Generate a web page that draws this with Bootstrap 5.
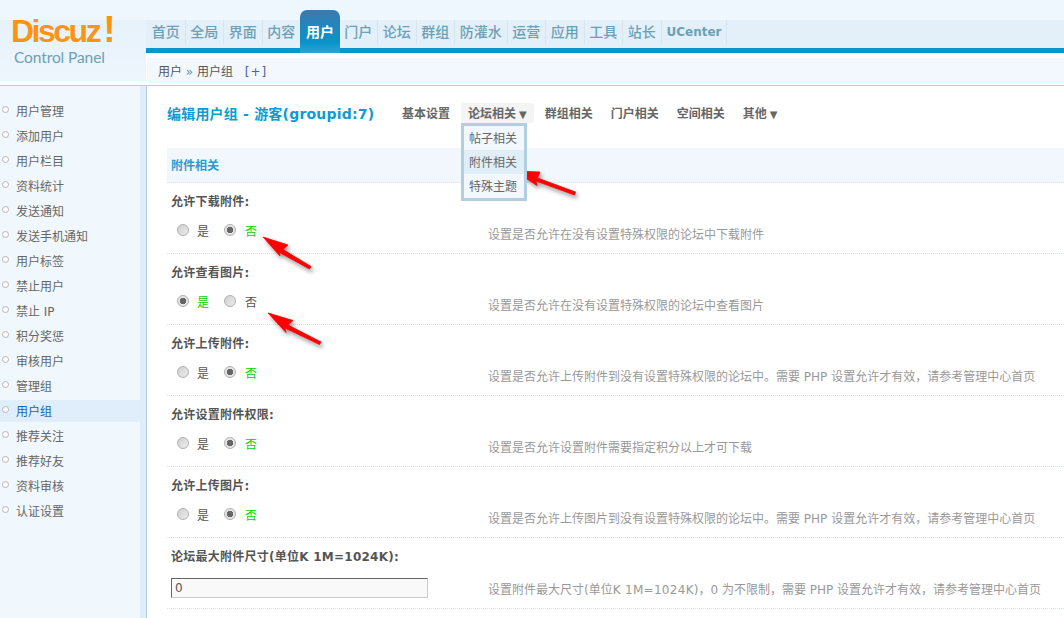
<!DOCTYPE html>
<html lang="zh-CN">
<head>
<meta charset="utf-8">
<title>Discuz! Control Panel</title>
<link href="https://cdn.jsdelivr.net/npm/bootstrap@5.3.0/dist/css/bootstrap.min.css" rel="stylesheet">
<style>
html,body{height:100%;}
body{background:#fff;color:#666;font:12px/20px "DejaVu Sans","Noto Sans CJK SC",sans-serif;overflow:hidden;}
.shell{width:1064px;height:618px;overflow:hidden;position:relative;}
.top{height:86px;border-bottom:1px solid #b3cfdd;background:#fff;}
.logo-box{width:146px;height:81px;background:linear-gradient(#eef6fe 0,#eef6fe 20px,#e6f1fa 20px,#eef6fd 80px);padding:16px 0 0 11px;flex:none;}
.logo-main{font:700 32px/30px "Liberation Sans",sans-serif;letter-spacing:-2.5px;color:#fb9313;text-shadow:0 0 2px #fff;white-space:nowrap;}
.logo-bang{font-size:37px;line-height:0;letter-spacing:0;margin-left:4px;}
.logo-sub{font:15.5px/20px "Lato",sans-serif;letter-spacing:-.1px;color:#6d9fb6;margin:1px 0 0 3px;}
.top-right{flex:1;min-width:0;border-left:1px solid #fff;}
.menu-wrap{height:48px;margin-left:-1px;background:linear-gradient(#eef6fe 0,#eef6fe 20px,#e3f0fa 20px,#e3f0fa 48px);padding-left:1px;}
.menu-link{display:block;height:24px;line-height:24px;margin-bottom:4px;padding:0 4.75px;font-size:14px;font-weight:500;color:#6ba0b6;border-right:1px solid #d5e6f1;text-decoration:none;}
.menu-last{font-size:12px;font-weight:700;padding-left:5px;}
.menu-on{height:43px;margin:0 0 -5px -1px;padding:12px 5.5px 0 6px;border:0;border-radius:7px 7px 0 0;background:linear-gradient(#3b79b2,#0a93c8 75%,#2aa5d4);color:#fff;font-weight:700;position:relative;z-index:1;line-height:20px;}
.menu-on:hover{color:#fff;}
.blue-bar{height:5px;background:#0099cc;margin-left:-1px;}
.crumb{height:25px;margin-top:5px;background:#f2f8fd;padding-left:11px;line-height:28px;color:#555;}
.crumb-add{color:#4a60aa;margin-left:8px;letter-spacing:1px;}
.crumb-sep{color:#6a8fb0;}
.page{height:532px;}
.side{width:147px;flex:none;background:#f1f8fd;border-right:1px solid #b3cfdd;box-shadow:inset -6px 0 0 #deedf8;padding-top:14px;}
.side-link{display:block;width:140px;height:22px;margin-bottom:3px;padding-left:16px;line-height:24px;color:#666;text-decoration:none;position:relative;}
.side-link::before{content:"";position:absolute;left:2px;top:6px;width:7px;height:7px;border:1px solid #b5b5b5;border-radius:50%;background:#fff;}
.side-on{background:#dfeefa;color:#1a66a8;}
.work{flex:1;min-width:0;padding-left:20px;}
.title-row{height:20px;margin-top:17px;margin-bottom:25px;}
.title-text{width:228px;flex:none;font-size:14px;line-height:22px;font-weight:700;color:#0e9bd0;white-space:nowrap;letter-spacing:.2px;}
.tab-link{display:block;height:20px;line-height:22px;padding:0 7px;margin-right:4px;font-weight:700;color:#666;text-decoration:none;white-space:nowrap;border-radius:3px;}
.tab-link:hover{color:#666;}
.tab-on{background:#f4f4f4;}
.tab-arrow{font-size:10px;margin-left:3px;}
.sub-menu.dropdown-menu{top:20px;left:0;min-width:0;width:66px;padding:0;border:3px solid #b0cfe0;border-radius:0;background:#f2f8fd;font-size:12px;}
.sub-menu .dropdown-item{height:24px;line-height:26px;padding:0 0 0 5px;color:#666;}
.sub-menu .sub-on{background:#e0eef8;}
.sec-head{height:35px;background:#f1f7fc;border-bottom:1px dotted #cfe6f5;padding-left:4px;line-height:36px;font-weight:700;color:#2a9ccc;}
.opt{height:71px;border-bottom:1px dotted #cfe6f5;}
.opt-left{width:317px;flex:none;padding:9px 0 0 4px;}
.opt-label{font-weight:700;color:#555;height:20px;white-space:nowrap;letter-spacing:.25px;}
.opt-ctl{margin-top:8px;height:20px;padding-left:6px;color:#555;}
.opt-desc{padding:42px 0 0 4px;color:#999;white-space:nowrap;}
.unit-txt{letter-spacing:.3px;}
.radio-x{appearance:none;-webkit-appearance:none;width:12px;height:12px;margin:0 8px 0 0;border:1px solid #b0b0b0;border-radius:50%;background:linear-gradient(135deg,#d0d0d0,#ececec);flex:none;}
.radio-x:checked{background:radial-gradient(circle,#666 0,#666 3px,#e4e4e4 3.5px);}
.radio-x + .radio-txt + .radio-x{margin-right:9px;}
.radio-txt{width:19px;margin-right:8px;padding-top:3px;}
.radio-txt.is-on{color:#00d400;}
.size-input.form-control{width:257px;height:20px;margin:3px 0 0 0;padding:0 3px;font:12px/18px "DejaVu Sans",sans-serif;color:#555;background:#f9f9f9;border:1px solid;border-color:#666 #ccc #ccc #666;border-radius:0;box-shadow:none;}
.opt-size .opt-ctl{padding-left:0;}
.marks{position:absolute;left:0;top:0;width:1064px;height:618px;pointer-events:none;z-index:5;filter:drop-shadow(2px 3px 2px rgba(0,0,0,.4));}
</style>
</head>
<body>
<div class="shell">
  <header class="top d-flex">
    <div class="logo-box">
      <div class="logo-main">Discuz<span class="logo-bang">!</span></div>
      <div class="logo-sub">Control Panel</div>
    </div>
    <div class="top-right">
      <ul class="menu-wrap nav align-items-end flex-nowrap">
        <li><a class="menu-link" href="#">首页</a></li>
        <li><a class="menu-link" href="#">全局</a></li>
        <li><a class="menu-link" href="#">界面</a></li>
        <li><a class="menu-link" href="#">内容</a></li>
        <li><a class="menu-link menu-on" href="#">用户</a></li>
        <li><a class="menu-link" href="#">门户</a></li>
        <li><a class="menu-link" href="#">论坛</a></li>
        <li><a class="menu-link" href="#">群组</a></li>
        <li><a class="menu-link" href="#">防灌水</a></li>
        <li><a class="menu-link" href="#">运营</a></li>
        <li><a class="menu-link" href="#">应用</a></li>
        <li><a class="menu-link" href="#">工具</a></li>
        <li><a class="menu-link" href="#">站长</a></li>
        <li><a class="menu-link menu-last" href="#">UCenter</a></li>
      </ul>
      <div class="blue-bar"></div>
      <div class="crumb">用户 <span class="crumb-sep">»</span> 用户组 <span class="crumb-add">[+]</span></div>
    </div>
  </header>
  <div class="page d-flex">
    <aside class="side">
      <ul class="list-unstyled mb-0">
        <li><a class="side-link" href="#">用户管理</a></li>
        <li><a class="side-link" href="#">添加用户</a></li>
        <li><a class="side-link" href="#">用户栏目</a></li>
        <li><a class="side-link" href="#">资料统计</a></li>
        <li><a class="side-link" href="#">发送通知</a></li>
        <li><a class="side-link" href="#">发送手机通知</a></li>
        <li><a class="side-link" href="#">用户标签</a></li>
        <li><a class="side-link" href="#">禁止用户</a></li>
        <li><a class="side-link" href="#">禁止 IP</a></li>
        <li><a class="side-link" href="#">积分奖惩</a></li>
        <li><a class="side-link" href="#">审核用户</a></li>
        <li><a class="side-link" href="#">管理组</a></li>
        <li><a class="side-link side-on" href="#">用户组</a></li>
        <li><a class="side-link" href="#">推荐关注</a></li>
        <li><a class="side-link" href="#">推荐好友</a></li>
        <li><a class="side-link" href="#">资料审核</a></li>
        <li><a class="side-link" href="#">认证设置</a></li>
      </ul>
    </aside>
    <main class="work">
      <div class="title-row d-flex">
        <div class="title-text">编辑用户组 - 游客(groupid:7)</div>
        <ul class="nav flex-nowrap">
          <li><a class="tab-link" href="#">基本设置</a></li>
          <li class="dropdown">
            <a class="tab-link tab-on" href="#">论坛相关<span class="tab-arrow">▼</span></a>
            <ul class="sub-menu dropdown-menu show">
              <li><a class="dropdown-item" href="#">帖子相关</a></li>
              <li><a class="dropdown-item sub-on" href="#">附件相关</a></li>
              <li><a class="dropdown-item" href="#">特殊主题</a></li>
            </ul>
          </li>
          <li><a class="tab-link" href="#">群组相关</a></li>
          <li><a class="tab-link" href="#">门户相关</a></li>
          <li><a class="tab-link" href="#">空间相关</a></li>
          <li><a class="tab-link" href="#">其他<span class="tab-arrow">▼</span></a></li>
        </ul>
      </div>
      <div class="sec-head">附件相关</div>

      <div class="opt d-flex">
        <div class="opt-left">
          <div class="opt-label">允许下载附件:</div>
          <div class="opt-ctl d-flex align-items-center">
            <input class="radio-x" type="radio" name="r1"><span class="radio-txt">是</span>
            <input class="radio-x" type="radio" name="r1" checked><span class="radio-txt is-on">否</span>
          </div>
        </div>
        <div class="opt-desc">设置是否允许在没有设置特殊权限的论坛中下载附件</div>
      </div>

      <div class="opt d-flex">
        <div class="opt-left">
          <div class="opt-label">允许查看图片:</div>
          <div class="opt-ctl d-flex align-items-center">
            <input class="radio-x" type="radio" name="r2" checked><span class="radio-txt is-on">是</span>
            <input class="radio-x" type="radio" name="r2"><span class="radio-txt">否</span>
          </div>
        </div>
        <div class="opt-desc">设置是否允许在没有设置特殊权限的论坛中查看图片</div>
      </div>

      <div class="opt d-flex">
        <div class="opt-left">
          <div class="opt-label">允许上传附件:</div>
          <div class="opt-ctl d-flex align-items-center">
            <input class="radio-x" type="radio" name="r3"><span class="radio-txt">是</span>
            <input class="radio-x" type="radio" name="r3" checked><span class="radio-txt is-on">否</span>
          </div>
        </div>
        <div class="opt-desc">设置是否允许上传附件到没有设置特殊权限的论坛中。需要 PHP 设置允许才有效，请参考管理中心首页</div>
      </div>

      <div class="opt d-flex">
        <div class="opt-left">
          <div class="opt-label">允许设置附件权限:</div>
          <div class="opt-ctl d-flex align-items-center">
            <input class="radio-x" type="radio" name="r4"><span class="radio-txt">是</span>
            <input class="radio-x" type="radio" name="r4" checked><span class="radio-txt is-on">否</span>
          </div>
        </div>
        <div class="opt-desc">设置是否允许设置附件需要指定积分以上才可下载</div>
      </div>

      <div class="opt d-flex">
        <div class="opt-left">
          <div class="opt-label">允许上传图片:</div>
          <div class="opt-ctl d-flex align-items-center">
            <input class="radio-x" type="radio" name="r5"><span class="radio-txt">是</span>
            <input class="radio-x" type="radio" name="r5" checked><span class="radio-txt is-on">否</span>
          </div>
        </div>
        <div class="opt-desc">设置是否允许上传图片到没有设置特殊权限的论坛中。需要 PHP 设置允许才有效，请参考管理中心首页</div>
      </div>

      <div class="opt opt-size d-flex">
        <div class="opt-left">
          <div class="opt-label">论坛最大附件尺寸(单位K 1M=1024K):</div>
          <div class="opt-ctl d-flex">
            <input class="size-input form-control" type="text" value="0">
          </div>
        </div>
        <div class="opt-desc">设置附件最大尺寸(单位<span class="unit-txt">K 1M=1024K</span>)，0 为不限制，需要 PHP 设置允许才有效，请参考管理中心首页</div>
      </div>
    </main>
  </div>
  <svg class="marks" viewBox="0 0 1064 618" aria-hidden="true">
    <g fill="#f00" stroke="#f00" stroke-width=".8" stroke-linejoin="round">
      <path d="M515 171L540 172L537.5 178L575.5 192L574.5 195L536 181L537 185.5Z"/>
      <path d="M263 237L288 245L283 249.5L311 266.5L309.5 269L279.5 252.5L280 256Z"/>
      <path d="M268 313L293 320.5L288 325L321 342L319.5 344.5L285 328L286 332.5Z"/>
    </g>
  </svg>
</div>
</body>
</html>
